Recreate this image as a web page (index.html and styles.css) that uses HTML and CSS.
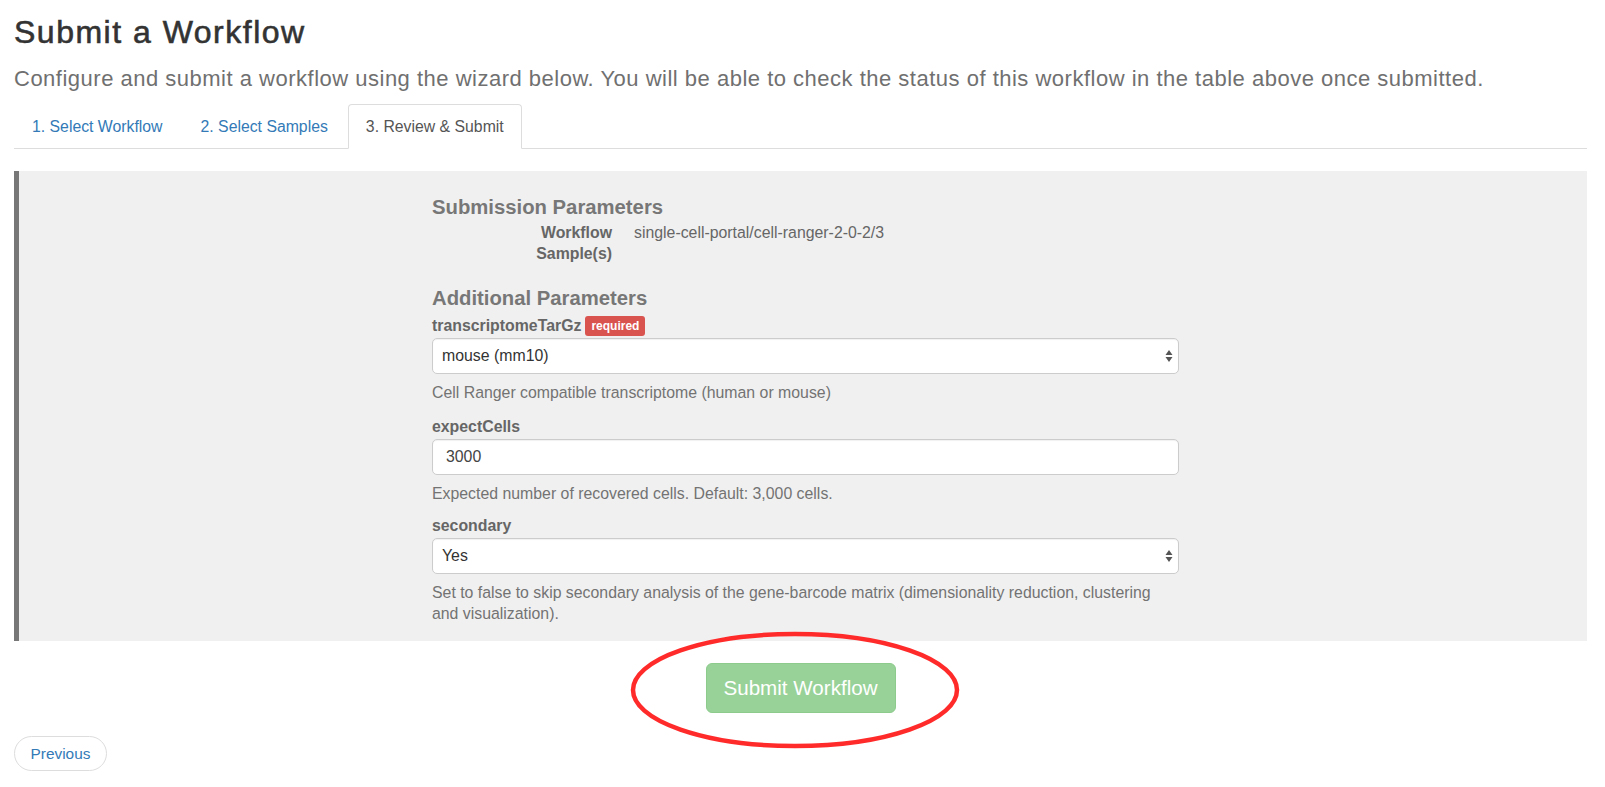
FILE: index.html
```html
<!DOCTYPE html>
<html>
<head>
<meta charset="utf-8">
<link rel="stylesheet" href="styles.css">
</head>
<body>
<div class="page">
  <h2 class="title">Submit a Workflow</h2>
  <p class="lead">Configure and submit a workflow using the wizard below. You will be able to check the status of this workflow in the table above once submitted.</p>
  <ul class="tabs">
    <li class="tab"><a>1. Select Workflow</a></li>
    <li class="tab"><a>2. Select Samples</a></li>
    <li class="tab active"><a>3. Review &amp; Submit</a></li>
  </ul>
  <div class="panel">
    <div class="col">
      <h4 class="section">Submission Parameters</h4>
      <dl class="params">
        <dt>Workflow</dt><dd>single-cell-portal/cell-ranger-2-0-2/3</dd>
        <dt>Sample(s)</dt><dd></dd>
      </dl>
      <h4 class="section second">Additional Parameters</h4>
      <div class="field">
        <div class="label">transcriptomeTarGz <span class="badge">required</span></div>
        <div class="control select">mouse (mm10)<span class="arrows"><svg width="8" height="14" viewBox="0 0 8 14"><path d="M4 1 L7.5 6 L0.5 6 Z M4 13 L7.5 8 L0.5 8 Z" fill="#555"/></svg></span></div>
        <p class="help">Cell Ranger compatible transcriptome (human or mouse)</p>
      </div>
      <div class="field">
        <div class="label">expectCells</div>
        <div class="control input">3000</div>
        <p class="help">Expected number of recovered cells. Default: 3,000 cells.</p>
      </div>
      <div class="field">
        <div class="label">secondary</div>
        <div class="control select">Yes<span class="arrows"><svg width="8" height="14" viewBox="0 0 8 14"><path d="M4 1 L7.5 6 L0.5 6 Z M4 13 L7.5 8 L0.5 8 Z" fill="#555"/></svg></span></div>
        <p class="help">Set to false to skip secondary analysis of the gene-barcode matrix (dimensionality reduction, clustering and visualization).</p>
      </div>
    </div>
  </div>
  <div class="submit-row">
    <button class="btn-submit">Submit Workflow</button>
    <svg class="annot" width="334" height="122" viewBox="0 0 334 122"><ellipse cx="167" cy="61" rx="162" ry="56" fill="none" stroke="#ff2b2b" stroke-width="4.5"/></svg>
  </div>
  <div class="prev-row">
    <button class="btn-prev">Previous</button>
  </div>
</div>
</body>
</html>
```
FILE: styles.css
```css
html, body {
  margin: 0;
  padding: 0;
  background: #fff;
}
body {
  font-family: "Liberation Sans", Arial, Helvetica, sans-serif;
  font-size: 15.85px;
  color: #333;
}
.page {
  padding: 0 18px 0 14px;
}
.title {
  margin: 0;
  padding-top: 14px;
  font-size: 32px;
  font-weight: normal;
  letter-spacing: 1.5px;
  line-height: 36px;
  color: #333;
  -webkit-text-stroke: 0.6px #333;
}
.lead {
  margin: 14px 0 0 0;
  font-size: 22px;
  letter-spacing: 0.5px;
  line-height: 30px;
  color: #707070;
  font-weight: 300;
}
.tabs {
  list-style: none;
  margin: 10px 0 0 0;
  padding: 0;
  display: flex;
  border-bottom: 1px solid #ddd;
  height: 44px;
}
.tab {
  margin-right: 2px;
  margin-bottom: -1px;
}
.tab a {
  display: block;
  padding: 0 17px;
  line-height: 44px;
  height: 44px;
  color: #337ab7;
  border: 1px solid transparent;
  border-radius: 4px 4px 0 0;
  font-size: 15.8px;
  box-sizing: border-box;
}
.tab.active a {
  color: #555;
  background: #fff;
  border-color: #ddd;
  border-bottom-color: #fff;
  height: 45px;
}
.panel {
  margin-top: 22px;
  background: #f0f0f0;
  border-left: 5px solid #777;
  padding: 24px 0 17px 0;
  display: flex;
}
.col {
  margin-left: 413px;
  width: 747px;
}
.section {
  margin: 0;
  font-size: 20.3px;
  line-height: 24px;
  font-weight: bold;
  color: #777;
}
.section.second {
  margin-top: 22px;
  margin-bottom: 5px;
}
.params {
  margin: 3px 0 0 20px;
  display: grid;
  grid-template-columns: 160px 1fr;
  column-gap: 22px;
  line-height: 21px;
}
.params dt {
  text-align: right;
  font-weight: bold;
  color: #666;
}
.params dd {
  margin: 0;
  color: #666;
  min-height: 21px;
}
.field {
  margin-bottom: 11px;
}
.field.first {
  margin-bottom: 13px;
}
.field:first-of-type {
  margin-bottom: 13px;
}
.field:last-child {
  margin-bottom: 0;
}
.label {
  font-weight: bold;
  color: #666;
  line-height: 22px;
  height: 22px;
  margin-bottom: 1px;
  display: flex;
  align-items: center;
  gap: 4px;
}
.badge {
  display: inline-block;
  background: #d9534f;
  color: #fff;
  font-size: 12px;
  font-weight: bold;
  line-height: 20px;
  padding: 0 6px;
  border-radius: 3px;
}
.control {
  height: 36px;
  box-sizing: border-box;
  background: #fff;
  border: 1px solid #ccc;
  border-radius: 5px;
  box-shadow: inset 0 1px 1px rgba(0,0,0,0.06);
  display: flex;
  align-items: center;
  color: #333;
}
.select {
  padding: 0 0 0 9px;
  justify-content: space-between;
}
.input {
  padding: 0 0 0 13px;
  color: #444;
}
.arrows {
  width: 8px;
  height: 14px;
  margin-right: 5px;
  display: flex;
}
.help {
  margin: 8px 0 0 0;
  color: #737373;
  line-height: 21px;
}
.submit-row {
  position: relative;
  display: flex;
  justify-content: center;
  padding-top: 22px;
}
.btn-submit {
  font-family: inherit;
  font-size: 20.6px;
  color: #fff;
  background: #98d298;
  border: 1px solid #8dcb8d;
  border-radius: 6px;
  width: 190px;
  height: 50px;
  padding: 0;
}
.annot {
  position: absolute;
  left: 614px;
  top: -12px;
}
.prev-row {
  margin-top: 23px;
}
.btn-prev {
  font-family: inherit;
  font-size: 15.4px;
  color: #337ab7;
  background: #fff;
  border: 1px solid #ddd;
  border-radius: 18px;
  width: 93px;
  height: 35px;
  padding: 0;
}
```
